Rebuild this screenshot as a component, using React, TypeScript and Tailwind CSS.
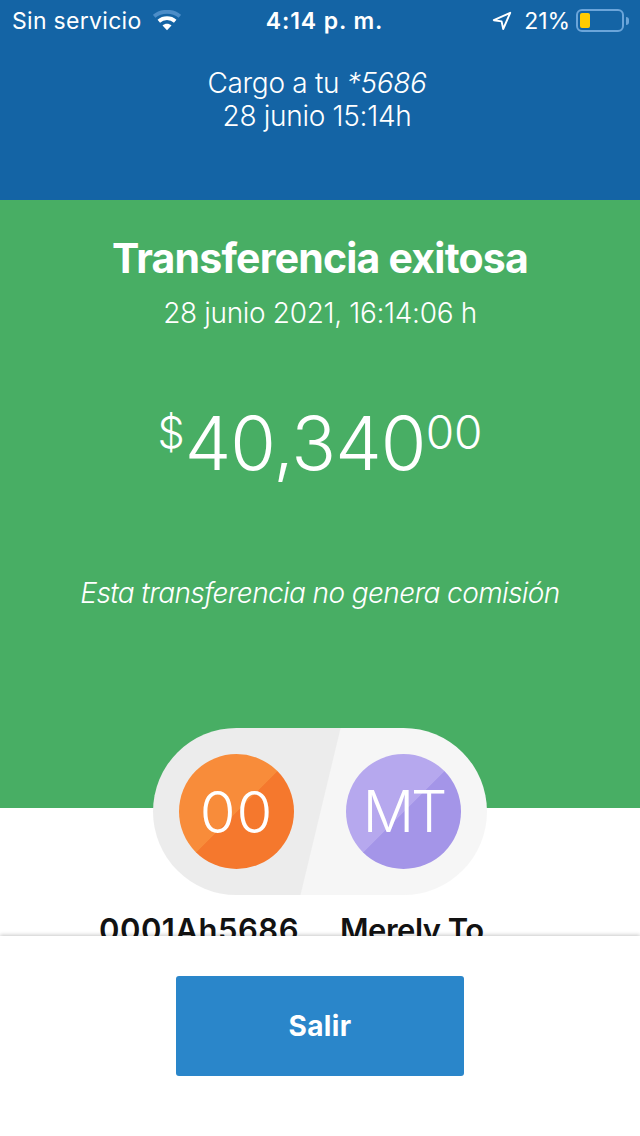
import React from "react";

type AvatarProps = {
  initials: string;
  className: string;
  textClassName: string;
};

// Round badge with a two-tone diagonal background
const Avatar: React.FC<AvatarProps> = ({ initials, className, textClassName }) => (
  <div
    className={`flex h-[115px] w-[115px] items-center justify-center rounded-full font-light text-white ${className}`}
  >
    <span className={`whitespace-nowrap leading-none ${textClassName}`}>{initials}</span>
  </div>
);

const WifiIcon: React.FC = () => (
  <svg className="mb-0.5" width="28" height="21" viewBox="0 0 28 21" fill="none">
    <path d="M1.2 6.3C8.2 0.2 19.8 0.2 26.8 6.3" stroke="#4c8dc8" strokeWidth="3.8" />
    <path d="M5.8 11.2C10.4 7.2 17.6 7.2 22.2 11.2" stroke="#fff" strokeWidth="3.8" />
    <path d="M9.5 15.6C12 13.1 16 13.1 18.5 15.6L14 20.2Z" fill="#fff" />
  </svg>
);

const LocationIcon: React.FC = () => (
  <svg width="20" height="20" viewBox="0 0 20 20" fill="none">
    <path
      d="M18.2 1.8L1.8 9.2L9.6 10.4L11.2 18Z"
      stroke="#fff"
      strokeWidth="1.9"
      strokeLinejoin="round"
    />
  </svg>
);

const StatusBar: React.FC = () => (
  <div className="grid h-[42px] grid-cols-3 items-center pl-3 pr-[11px] text-[23px] leading-10 text-white">
    <div className="flex items-center gap-[11px]">
      <span className="whitespace-nowrap tracking-[0.3px]">Sin servicio</span>
      <WifiIcon />
    </div>
    <div className="ml-2 whitespace-nowrap text-center font-semibold tracking-[0.9px]">
      4:14 p. m.
    </div>
    <div className="flex items-center justify-end">
      <LocationIcon />
      <span className="ml-3 tracking-[-0.1px]">21%</span>
      <div className="ml-1.5 mb-px h-[23px] w-12 rounded-[6px] border-2 border-[#6ba5da] p-[2px]">
        <div className="h-full w-2.5 rounded-[2px] bg-[#ffcc00]" />
      </div>
      <div className="ml-0.5 h-2 w-[3px] rounded-r-full bg-[#6ba5da]" />
    </div>
  </div>
);

const App: React.FC = () => {
  return (
    <div className="flex h-[1136px] w-[640px] flex-col overflow-hidden bg-white font-['Inter',sans-serif]">
      <header className="h-[200px] shrink-0 bg-[#1464a5]">
        <StatusBar />
        <div className="mt-[25px] pr-[6px] text-center text-[28px] font-light leading-[33px] tracking-[-0.3px] text-white">
          <p>
            Cargo a tu <span className="italic">*5686</span>
          </p>
          <p>28 junio 15:14h</p>
        </div>
      </header>

      {/* Transfer result */}
      <main className="h-[736px] shrink-0 overflow-hidden">
        <section className="flex h-[608px] flex-col items-center bg-[#48ae64] text-white">
          <h1 className="mt-[33px] whitespace-nowrap text-[41px] font-bold leading-[50px] tracking-[-0.8px]">
            Transferencia exitosa
          </h1>
          <p className="mt-3 whitespace-nowrap text-[28px] font-light leading-9 tracking-[-0.33px]">
            28 junio 2021, 16:14:06 h
          </p>
          <div className="mt-[67px] flex items-start whitespace-nowrap font-light">
            <span className="mt-[9px] text-[43px] leading-[50px]">$</span>
            <span className="text-[74px] leading-[90px] tracking-[-0.9px]">40,340</span>
            <span className="mt-[9px] text-[46px] leading-[50px]">00</span>
          </div>
          <p className="mt-[87px] whitespace-nowrap text-[28px] font-light italic leading-9 tracking-[-0.6px]">
            Esta transferencia no genera comisión
          </p>
        </section>

        {/* Origin and destination */}
        <div className="relative mx-auto -mt-[80px] flex h-[167px] w-[334px] items-center justify-between rounded-full bg-[linear-gradient(103.5deg,#ececec_50%,#f6f6f6_50.3%)] px-[26px]">
          <Avatar
            initials="00"
            className="bg-[linear-gradient(135deg,#f88c3a_50%,#f5782d_50.5%)]"
            textClassName="text-[58px] tracking-[1px]"
          />
          <Avatar
            initials="MT"
            className="bg-[linear-gradient(135deg,#b6a8ee_50%,#a495e8_50.5%)]"
            textClassName="text-[57px] tracking-[-3px]"
          />
        </div>
        <div className="mt-[15px] flex pl-[99px] text-[31px] font-semibold leading-[40px] text-[#121212]">
          <span className="w-[241px] whitespace-nowrap tracking-[0.5px]">0001Ah5686</span>
          <span className="whitespace-nowrap tracking-[-0.5px]">Merely To</span>
        </div>
      </main>

      <footer className="relative flex h-[200px] shrink-0 justify-center bg-white pt-10 shadow-[0_-1px_4px_rgba(0,0,0,0.22)]">
        <button className="h-[100px] w-72 rounded-[3px] bg-[#2a86ca] pb-px text-[28px] font-bold tracking-[0.4px] text-white">
          Salir
        </button>
      </footer>
    </div>
  );
};

export default App;
